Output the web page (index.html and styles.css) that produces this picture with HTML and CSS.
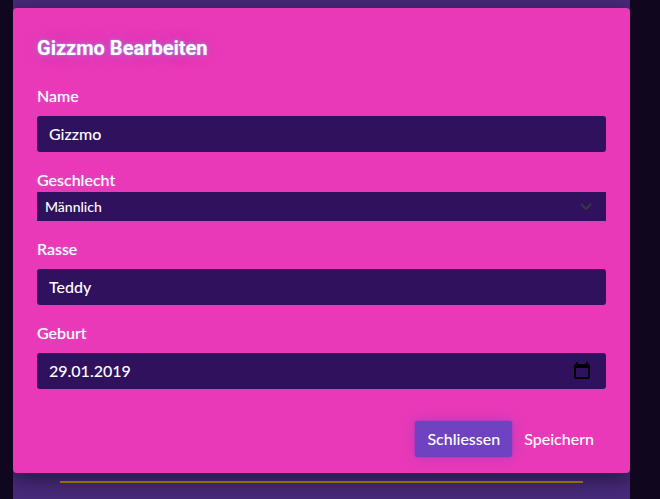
FILE: index.html
```html
<!DOCTYPE html>
<html lang="de">
<head>
<meta charset="utf-8">
<title>Gizzmo Bearbeiten</title>
<link rel="stylesheet" href="styles.css">
</head>
<body>
<main class="page">
  <form class="modal">
    <h1 class="title">Gizzmo Bearbeiten</h1>
    <div class="field">
      <label for="name">Name</label>
      <input class="control" id="name" type="text" value="Gizzmo">
    </div>
    <div class="field field-select">
      <label for="gender">Geschlecht</label>
      <div class="select-box">
        <select id="gender"><option>Männlich</option><option>Weiblich</option></select>
        <svg class="chevron" viewBox="0 0 12 8" aria-hidden="true"><path d="M1.500 1.500 6 6l4.500-4.500"/></svg>
      </div>
    </div>
    <div class="field">
      <label for="breed">Rasse</label>
      <input class="control" id="breed" type="text" value="Teddy">
    </div>
    <div class="field">
      <label for="birth">Geburt</label>
      <div class="control date-box">
        <input id="birth" type="text" inputmode="numeric" value="29.01.2019">
        <button class="picker" type="button" aria-label="Kalender">
          <svg viewBox="0 0 16 18" aria-hidden="true"><path fill-rule="evenodd" d="M2 0h2v2h8V0h2v2h.5L16 3.500v12L14.500 17h-13L0 15.500v-12L1.500 2H2zM2 6v9h12V6z"/></svg>
        </button>
      </div>
    </div>
    <div class="actions">
      <button class="button button-close" type="button">Schliessen</button>
      <button class="button" type="submit">Speichern</button>
    </div>
  </form>
  <hr class="divider">
</main>
</body>
</html>
```
FILE: styles.css
```css
* {
  box-sizing: border-box;
}

body {
  margin: 0;
  background: #10061e;
  color: #fff;
  font: 500 16px/24px Lato, sans-serif;
}

.page {
  min-height: 100vh;
  margin: 0 30px 0 13px;
  padding-top: 8px;
  background: #472a7a;
  overflow: clip;
}

.modal {
  padding: 24px 24px 16px;
  border-radius: 4px;
  background: #ea39b8;
  box-shadow: 0 6px 20px rgba(16, 6, 30, 0.6);
}

.title {
  margin: 0 0 20px;
  font: 700 20px/32px Roboto, sans-serif;
  text-shadow: 0 0 2px rgba(140, 200, 255, 0.8), 0 0 8px rgba(150, 120, 220, 0.6), 0 0 20px rgba(170, 100, 200, 0.3);
}

.field {
  display: flex;
  flex-direction: column;
  gap: 8px;
  margin-bottom: 16px;
}

.field-select {
  gap: 0;
}

label {
  text-shadow: 0 0 2px rgba(150, 190, 255, 0.4);
}

input,
select,
button {
  border: 0;
  color: inherit;
  font: inherit;
}

.control {
  width: 100%;
  height: 36px;
  padding: 0 12px;
  border-radius: 3px;
  background: #30115e;
}

input.control {
  padding-bottom: 2px;
}

.select-box {
  display: grid;
  align-items: center;
  background: #30115e;
}

.select-box > * {
  grid-area: 1 / 1;
}

select {
  width: 100%;
  height: 29px;
  padding: 0 8px;
  appearance: none;
  background: transparent;
  font-size: 14px;
}

option {
  background: #30115e;
}

.chevron {
  width: 12px;
  height: 8px;
  margin-right: 14px;
  justify-self: end;
  fill: none;
  stroke: #343a40;
  stroke-width: 2;
  stroke-linecap: round;
  stroke-linejoin: round;
  pointer-events: none;
}

.date-box {
  display: flex;
  align-items: center;
}

.date-box input {
  flex: 1;
  min-width: 0;
  padding: 0;
  background: transparent;
}

.picker {
  display: flex;
  padding: 0 4px;
  background: transparent;
}

.picker svg {
  width: 16px;
  height: 18px;
}

.actions {
  display: flex;
  justify-content: flex-end;
  margin-top: 32px;
}

.button {
  height: 36px;
  padding: 0 12px;
  border-radius: 3px;
  background: transparent;
}

.button-close {
  background: #6f42c1;
  box-shadow: 0 0 2px #6f42c1, 0 0 16px rgba(111, 66, 193, 0.4);
}

.divider {
  height: 2px;
  margin: 8px 47px 0;
  border: 0;
  background: #8c7006;
  position: relative;
}
```
